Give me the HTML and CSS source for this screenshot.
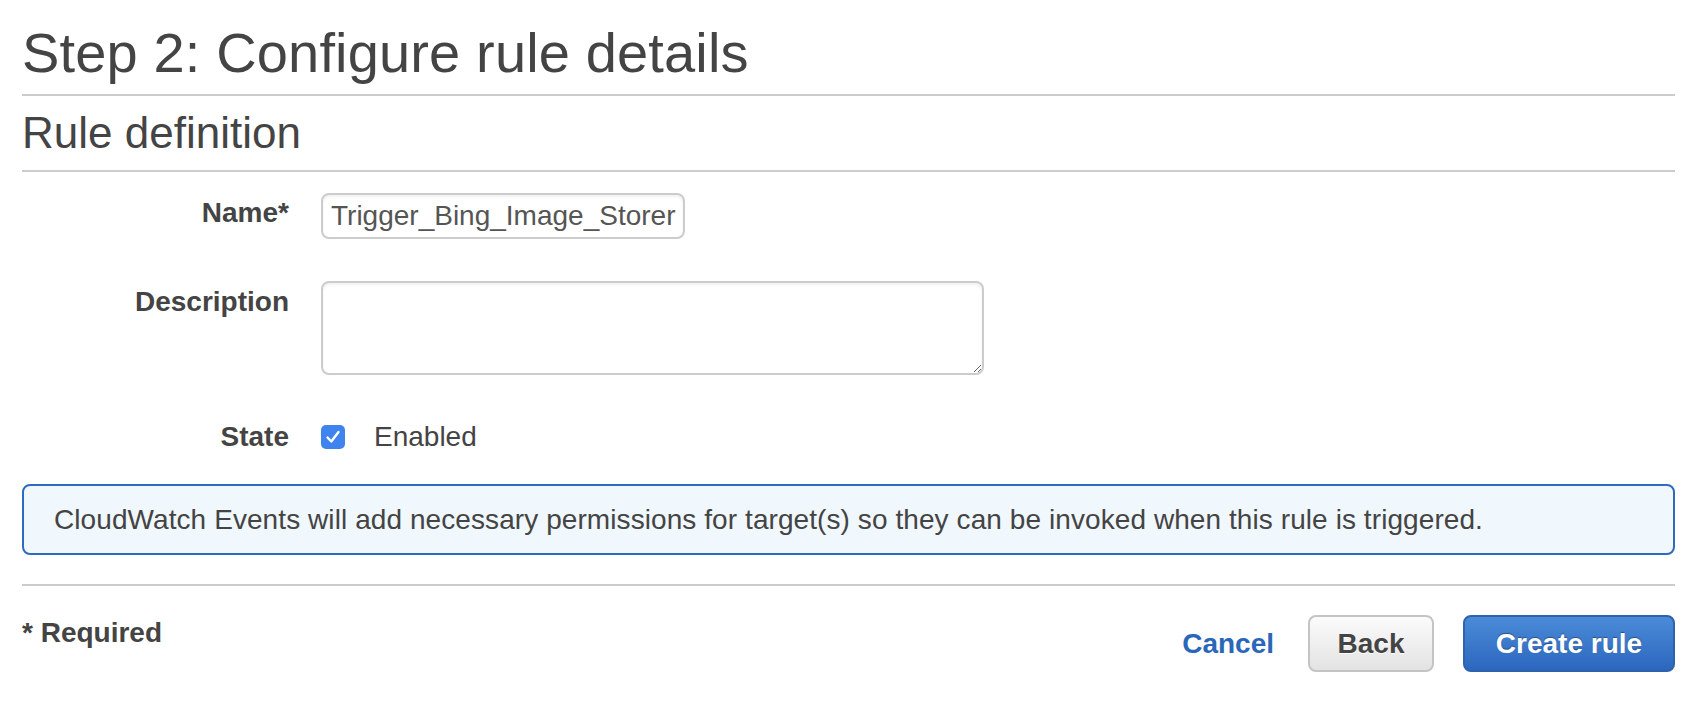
FILE: index.html
```html
<!DOCTYPE html>
<html lang="en">
<head>
<meta charset="utf-8">
<title>Step 2: Configure rule details</title>
<link rel="stylesheet" href="styles.css">
</head>
<body>
<div class="page">
  <h1 class="title">Step 2: Configure rule details</h1>
  <h2 class="section">Rule definition</h2>

  <div class="form">
    <div class="row row-name">
      <label class="label" for="name">Name*</label>
      <input class="input" id="name" type="text" value="Trigger_Bing_Image_Storer">
    </div>
    <div class="row row-desc">
      <label class="label" for="desc">Description</label>
      <textarea class="textarea" id="desc"></textarea>
    </div>
    <div class="row row-state">
      <span class="label label-state">State</span>
      <span class="checkbox">
        <svg width="24" height="24" viewBox="0 0 24 24">
          <rect x="0" y="0" width="24" height="24" rx="5" fill="#3f83ef"/>
          <path d="M6.5 12.5 L10.3 16.5 L17.5 7" fill="none" stroke="#fff" stroke-width="2.4" stroke-linecap="round" stroke-linejoin="round"/>
        </svg>
      </span>
      <span class="check-text">Enabled</span>
    </div>
  </div>

  <div class="info">CloudWatch Events will add necessary permissions for target(s) so they can be invoked when this rule is triggered.</div>

  <div class="footer">
    <div class="required">* Required</div>
    <div class="actions">
      <a class="link-btn" href="#">Cancel</a>
      <button class="btn btn-back" type="button">Back</button>
      <button class="btn btn-primary" type="button">Create rule</button>
    </div>
  </div>
</div>
</body>
</html>
```

FILE: styles.css
```css
* { box-sizing: border-box; }

html, body {
  margin: 0;
  padding: 0;
  background: #ffffff;
}

body {
  font-family: "Liberation Sans", Arial, Helvetica, sans-serif;
  color: #444444;
}

.page {
  width: 1653px;
  margin-left: 22px;
}

.title {
  margin: 0;
  padding-top: 21px;
  padding-bottom: 9px;
  font-size: 56px;
  line-height: 64px;
  font-weight: normal;
  letter-spacing: 0.15px;
  color: #444444;
  border-bottom: 2px solid #cccccc;
}

.section {
  margin: 12px 0 0 0;
  padding-bottom: 12px;
  font-size: 44px;
  line-height: 50px;
  font-weight: normal;
  color: #444444;
  border-bottom: 2px solid #cccccc;
}

.form {
  display: flex;
  flex-direction: column;
}

.row {
  display: flex;
  align-items: flex-start;
  gap: 32px;
}

.row-name { margin-top: 21px; }
.row-desc { margin-top: 42px; }
.row-state { margin-top: 46px; align-items: center; height: 32px; }

.label {
  width: 267px;
  text-align: right;
  font-size: 28px;
  line-height: 32px;
  font-weight: bold;
  color: #444444;
  padding-top: 4px;
}

.row-desc .label { padding-top: 5px; }
.label-state { padding-top: 0; }

.input {
  width: 364px;
  height: 46px;
  padding: 0 6px 0 8px;
  border: 2px solid #cccccc;
  border-radius: 8px;
  font-family: "Liberation Sans", Arial, Helvetica, sans-serif;
  font-size: 28px;
  color: #555555;
  background: #ffffff;
  box-shadow: inset 0 2px 3px rgba(0, 0, 0, 0.06);
  outline: none;
}

.textarea {
  width: 663px;
  height: 94px;
  padding: 8px 10px;
  border: 2px solid #cccccc;
  border-radius: 8px;
  font-family: "Liberation Sans", Arial, Helvetica, sans-serif;
  font-size: 28px;
  color: #555555;
  background: #ffffff;
  box-shadow: inset 0 2px 3px rgba(0, 0, 0, 0.06);
  outline: none;
  resize: both;
}

.checkbox {
  display: flex;
  width: 24px;
  height: 24px;
}

.check-text {
  margin-left: -3px;
  font-size: 28px;
  line-height: 32px;
  color: #444444;
}

.info {
  margin-top: 31px;
  padding: 18px 30px 17px 30px;
  border: 2px solid #2f6bbd;
  border-radius: 8px;
  background: #f0f7fd;
  font-size: 28px;
  line-height: 32px;
  letter-spacing: 0.08px;
  color: #444444;
}

.footer {
  margin-top: 29px;
  border-top: 2px solid #cccccc;
  padding-top: 29px;
  display: flex;
  justify-content: space-between;
  align-items: flex-start;
}

.required {
  margin-top: 2px;
  font-size: 28px;
  line-height: 32px;
  font-weight: bold;
  color: #444444;
}

.actions {
  display: flex;
  align-items: center;
}

.link-btn {
  font-size: 28px;
  line-height: 32px;
  font-weight: bold;
  color: #2a67b9;
  text-decoration: none;
  margin-right: 34px;
}

.btn {
  height: 57px;
  border-radius: 8px;
  font-family: "Liberation Sans", Arial, Helvetica, sans-serif;
  font-size: 28px;
  font-weight: bold;
  padding: 0;
  cursor: pointer;
}

.btn-back {
  width: 126px;
  margin-right: 29px;
  color: #444444;
  border: 2px solid #c4c4c4;
  background: linear-gradient(#fbfbfb, #e3e3e3);
  text-shadow: 0 1px 0 #ffffff;
}

.btn-primary {
  width: 212px;
  color: #ffffff;
  border: 2px solid #2d62ad;
  background: linear-gradient(#4b8bd8, #2c67be);
  text-shadow: 0 -1px 1px rgba(0, 0, 0, 0.35);
}
```
